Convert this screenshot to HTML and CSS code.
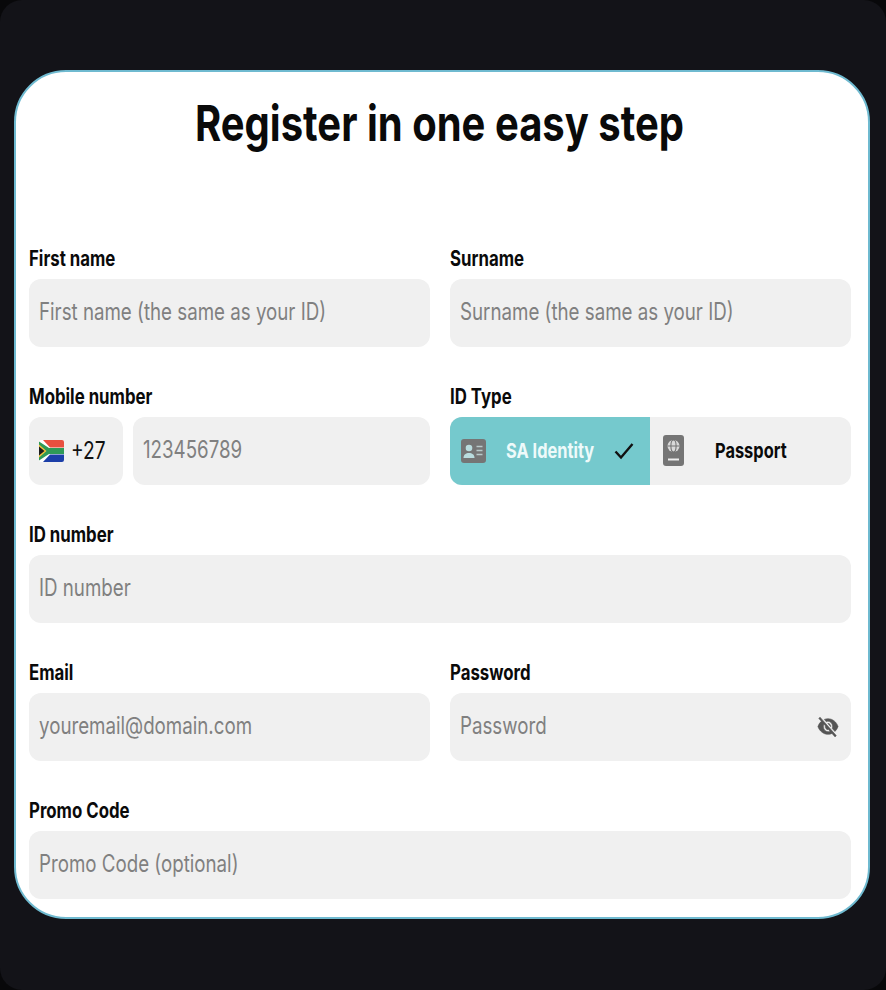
FILE: index.html
```html
<!DOCTYPE html>
<html lang="en">

<head>
    <meta charset="UTF-8">
    <meta name="viewport" content="width=device-width, initial-scale=1.0">
    <title>Register</title>
    <link rel="stylesheet" href="styles.css">
</head>

<body>
    <div class="frame">
        <form class="card">
            <h1 class="title">Register in one easy step</h1>

            <div class="grid">
                <div class="field">
                    <label class="label">First name</label>
                    <div class="box"><input class="input" type="text" placeholder="First name (the same as your ID)"></div>
                </div>
                <div class="field">
                    <label class="label">Surname</label>
                    <div class="box"><input class="input" type="text" placeholder="Surname (the same as your ID)"></div>
                </div>

                <div class="field">
                    <label class="label">Mobile number</label>
                    <div class="phone">
                        <div class="box dial">
                            <svg class="flag" viewBox="0 0 25 22">
                                <rect width="25" height="22" rx="2" fill="#fff"/>
                                <path d="M2 0h21a2 2 0 0 1 2 2v5.5H11L4 0z" fill="#e8503f"/>
                                <path d="M2 22h21a2 2 0 0 0 2-2v-5.5H11L4 22z" fill="#1c3fa8"/>
                                <path d="M0 1.5v19L10 14h15V8H10z" fill="#2f9a57"/>
                                <path d="M0 4.5v13L7.5 11z" fill="#f5c23c"/>
                                <path d="M0 6.5v9L5.5 11z" fill="#1b1b1b"/>
                            </svg>
                            <span class="dial-code">+27</span>
                        </div>
                        <div class="box number"><input class="input" type="text" placeholder="123456789"></div>
                    </div>
                </div>
                <div class="field">
                    <label class="label">ID Type</label>
                    <div class="id-type">
                        <div class="id-option active">
                            <svg class="id-icon" viewBox="0 0 25 24">
                                <rect width="25" height="24" rx="3" fill="#757575"/>
                                <circle cx="8" cy="9" r="3.3" fill="#b9dcde"/>
                                <path d="M2.5 19c0-3.6 2.5-5 5.5-5s5.5 1.4 5.5 5z" fill="#b9dcde"/>
                                <path d="M15.5 7.5h6M15.5 11.5h6M15.5 15.5h6" stroke="#b9c9ca" stroke-width="1.6"/>
                            </svg>
                            <span class="id-name">SA Identity</span>
                            <svg class="check" viewBox="0 0 20 18">
                                <path d="M1.5 9.5l5.5 6L18.5 2" fill="none" stroke="#111" stroke-width="2.4"/>
                            </svg>
                        </div>
                        <div class="id-option">
                            <svg class="id-icon passport" viewBox="0 0 21 31">
                                <rect width="21" height="31" rx="3" fill="#757575"/>
                                <circle cx="10.5" cy="11" r="6" fill="#d9d9d9"/>
                                <ellipse cx="10.5" cy="11" rx="2.6" ry="6" fill="none" stroke="#757575" stroke-width="1.1"/>
                                <path d="M4.5 11h12" stroke="#757575" stroke-width="1.1"/>
                                <path d="M5 24.5h11" stroke="#eee" stroke-width="1.8"/>
                            </svg>
                            <span class="id-name">Passport</span>
                        </div>
                    </div>
                </div>

                <div class="field wide">
                    <label class="label">ID number</label>
                    <div class="box"><input class="input" type="text" placeholder="ID number"></div>
                </div>

                <div class="field">
                    <label class="label">Email</label>
                    <div class="box"><input class="input" type="text" placeholder="youremail@domain.com"></div>
                </div>
                <div class="field">
                    <label class="label">Password</label>
                    <div class="box password">
                        <input class="input" type="password" placeholder="Password">
                        <svg class="eye" viewBox="0 0 24 24" preserveAspectRatio="none">
                            <path fill="#555" stroke="#555" stroke-width="0.6" d="M12 7c2.76 0 5 2.24 5 5 0 .65-.13 1.26-.36 1.83l2.92 2.92c1.51-1.26 2.7-2.89 3.43-4.75-1.73-4.39-6-7.5-11-7.5-1.4 0-2.74.25-3.98.7l2.16 2.16C10.74 7.13 11.35 7 12 7zM2 4.27l2.28 2.28.46.46C3.08 8.3 1.78 10.02 1 12c1.73 4.39 6 7.5 11 7.5 1.55 0 3.03-.3 4.38-.84l.42.42L19.73 22 21 20.73 3.27 3 2 4.27zM7.53 9.8l1.55 1.55c-.05.21-.08.43-.08.65 0 1.66 1.34 3 3 3 .22 0 .44-.03.65-.08l1.55 1.55c-.67.33-1.41.53-2.2.53-2.76 0-5-2.24-5-5 0-.79.2-1.53.53-2.2zm4.31-.78l3.15 3.15.02-.16c0-1.66-1.34-3-3-3l-.17.01z"/>
                        </svg>
                    </div>
                </div>

                <div class="field wide">
                    <label class="label">Promo Code</label>
                    <div class="box"><input class="input" type="text" placeholder="Promo Code (optional)"></div>
                </div>
            </div>
        </form>
    </div>
</body>

</html>
```

FILE: styles.css
```css
* {
    box-sizing: border-box;
}

body {
    margin: 0;
    background-color: #08080a;
    font-family: 'Inter', sans-serif;
}

.frame {
    width: 886px;
    height: 990px;
    padding: 70px 16px 71px 14px;
    background-color: #131318;
    border-radius: 22px;
}

.card {
    height: 849px;
    padding: 0 18px 0 13px;
    background-color: #fff;
    border: 2px solid #6fbad0;
    border-radius: 52px;
}

/* the text in this design is narrow: all of it is squeezed in width */
.title {
    margin: 20.5px 0 94px;
    font-size: 50px;
    font-weight: 700;
    line-height: 60px;
    text-align: center;
    white-space: nowrap;
    color: #0a0a0a;
    transform: scaleX(0.8);
}

.grid {
    display: grid;
    grid-template-columns: 401px 401px;
    column-gap: 20px;
    row-gap: 38px;
}

.wide {
    grid-column: 1 / 3;
}

.label {
    display: block;
    height: 24px;
    margin-bottom: 8px;
    font-size: 21px;
    font-weight: 700;
    line-height: 24px;
    white-space: nowrap;
    color: #0a0a0a;
    transform: scaleX(0.8);
    transform-origin: left;
}

.box {
    display: flex;
    align-items: center;
    height: 68px;
    padding-left: 10px;
    background-color: #f0f0f0;
    border-radius: 12px;
}

.input {
    display: block;
    flex: none;
    width: 128%;
    height: 100%;
    padding: 0 0 2px;
    background: none;
    border: none;
    outline: none;
    font-family: 'Inter', sans-serif;
    font-size: 24px;
    color: #111;
    transform: scaleX(0.78);
    transform-origin: left;
}

.input::placeholder {
    color: #808080;
}

.phone {
    display: flex;
    gap: 10px;
}

.dial {
    flex: 0 0 94px;
    gap: 7px;
}

.number {
    flex: 1;
}

.flag {
    width: 25px;
    height: 22px;
}

.dial-code {
    width: 33px;
    font-size: 24px;
    color: #111;
    transform: scaleX(0.8);
    transform-origin: left;
}

.id-type {
    display: flex;
    height: 68px;
    border-radius: 12px;
    overflow: hidden;
    background-color: #f0f0f0;
}

.id-option {
    display: flex;
    align-items: center;
    flex: 1;
    min-width: 0;
    padding-left: 11px;
    font-size: 20.5px;
    font-weight: 700;
    color: #0a0a0a;
}

.id-option.active {
    flex: 0 0 200px;
    background-color: #75c9cd;
    color: #eefafa;
}

.id-icon {
    flex: none;
    width: 25px;
    height: 24px;
}

.id-icon.passport {
    width: 21px;
    height: 31px;
    margin-left: 2px;
}

.id-name {
    flex: 0 0 88px;
    min-width: 0;
    margin-left: 20px;
    white-space: nowrap;
    transform: scaleX(0.8);
    transform-origin: left;
}

.id-option .passport + .id-name {
    margin-left: 31px;
}

.check {
    flex: none;
    width: 20px;
    height: 18px;
    margin-left: 20px;
}

.password {
    position: relative;
}

.eye {
    position: absolute;
    top: 21px;
    right: 12px;
    width: 22px;
    height: 25px;
}
```
